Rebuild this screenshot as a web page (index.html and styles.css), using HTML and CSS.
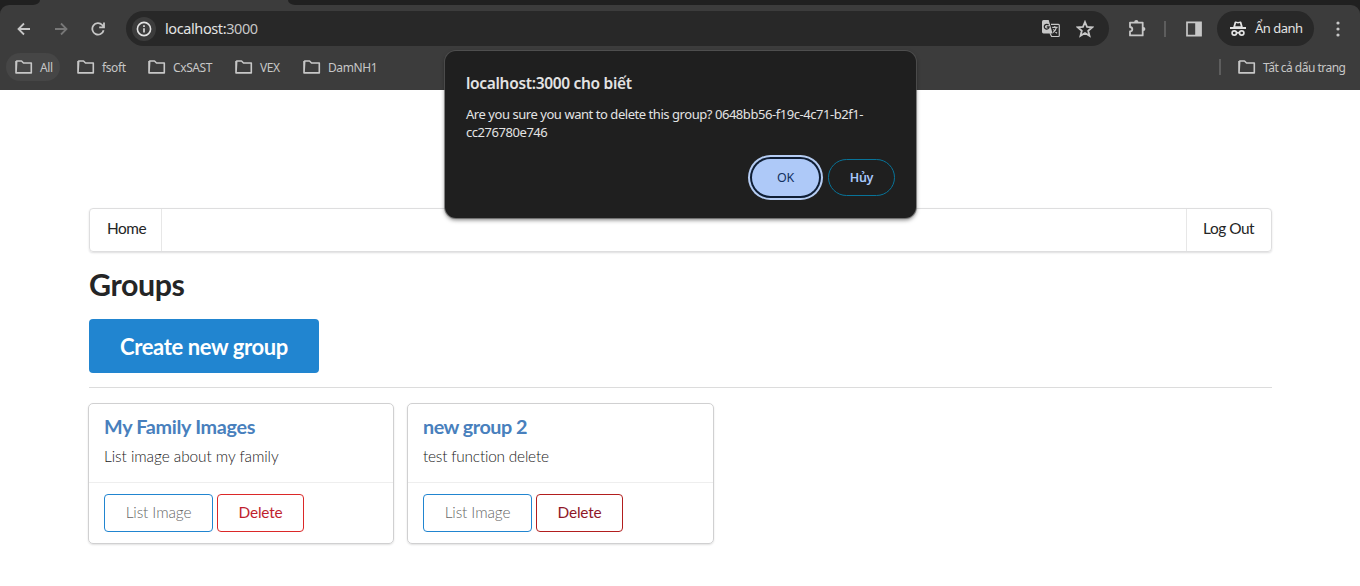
FILE: index.html
```html
<!DOCTYPE html>
<html lang="vi">
<head>
<meta charset="utf-8">
<title>localhost:3000</title>
<link rel="stylesheet" href="styles.css">
</head>
<body>
<svg class="defs" width="0" height="0">
  <symbol id="folder" viewBox="0 0 18 14"><path d="M1.7 1h4.8l2 2h7.8v9.9H1z M1 1v12" fill="none" stroke="currentColor" stroke-width="1.6" stroke-linejoin="round"/></symbol>
</svg>
<header class="browser">
  <div class="tabstrip"><div class="strip-left"></div><div class="strip-right"></div></div>
  <div class="chrome">
    <div class="toolbar">
      <svg class="back" width="14" height="14" viewBox="0 0 14 14"><path d="M13 7H2M7 1.5L1.5 7 7 12.5"/></svg>
      <svg class="forward" width="14" height="14" viewBox="0 0 14 14"><path d="M1 7h11M7 1.5L12.5 7 7 12.5"/></svg>
      <svg class="reload" width="14" height="14" viewBox="0 0 14 14"><path d="M12.6 8.2A5.7 5.7 0 1 1 11.2 3l1.5 1.7M13 .5v4.8H8.2"/></svg>
      <div class="address">
        <span class="info"><svg width="16" height="16" viewBox="0 0 16 16"><circle cx="8" cy="8" r="6.6"/><path d="M8 7.2v4.2M8 4.3v1.7"/></svg></span>
        <span class="url">localhost:<i>3000</i></span>
        <svg class="translate" width="18" height="18" viewBox="0 0 18 18"><path d="M9 4.4h7.4q.9 0 .9.9v10.3q0 .9-.9.9H9.6L8 13.2" fill="none" stroke="#c7c7c7" stroke-width="1.2"/><path d="M1.5 0h5.2l3.9 13.4H1.5Q0 13.4 0 12V1.5Q0 0 1.5 0z" fill="#c7c7c7"/><path d="M6.6 5.2A2.4 2.4 0 1 0 7.1 7H4.8" fill="none" stroke="#282828" stroke-width="1.3"/><path d="M10.2 7.4h5.4M12.8 6v1.4M14.4 7.5q-.8 3-3.4 5.2M11.4 9.2q1.4 2.4 3.6 4" fill="none" stroke="#c7c7c7" stroke-width="1.1"/></svg>
        <svg class="star" width="18" height="18" viewBox="0 0 18 18"><path d="M9 2l2 4.9 5.2.4-4 3.4 1.3 5.1L9 13l-4.5 2.8 1.3-5.1-4-3.4L7 6.9z"/></svg>
      </div>
      <svg class="puzzle" width="19" height="19" viewBox="0 0 19 19"><path d="M2 3.6h12.7v12.8H2v-4q2.3-.2 2.3-2.2T2 8z"/><path class="knob" d="M6.2 3.6V3a2.1 2.1 0 0 1 4.2 0v.6zM14.7 7.9h.6a2.1 2.1 0 0 1 0 4.2h-.6z"/></svg>
      <span class="bar"></span>
      <svg class="panel" width="16" height="16" viewBox="0 0 16 16"><path d="M1 1.3h14v13.4H1z" fill="none" stroke="#c7c7c7" stroke-width="1.7"/><path d="M9.2 1h6v14h-6z" fill="#c7c7c7"/></svg>
      <div class="incognito">
        <svg width="18" height="18" viewBox="0 0 18 18"><path d="M4.2 7L5.6 2q.3-.8 1.1-.5L9 2l2.3-.5q.8-.3 1.1.5l1.4 5z" fill="#e3e3e3"/><path d="M6.2 6.3l1-3.2L9 3.5l1.8-.4 1 3.2z" fill="#282828"/><path d="M1 8h16M7.6 13q1.4-.8 2.8 0" fill="none" stroke="#e3e3e3" stroke-width="1.8"/><g fill="none" stroke="#e3e3e3" stroke-width="1.7"><circle cx="5.3" cy="13" r="2.2"/><circle cx="12.7" cy="13" r="2.2"/></g></svg>
        <span>Ẩn danh</span>
      </div>
      <svg class="dots" width="4" height="16" viewBox="0 0 4 16"><circle cx="2" cy="2" r="1.6"/><circle cx="2" cy="8" r="1.6"/><circle cx="2" cy="14" r="1.6"/></svg>
    </div>
    <nav class="bookmarks">
      <a class="bm bm-all"><svg><use href="#folder"/></svg><span>All</span></a>
      <a class="bm bm-fsoft"><svg><use href="#folder"/></svg><span>fsoft</span></a>
      <a class="bm bm-cx"><svg><use href="#folder"/></svg><span>CxSAST</span></a>
      <a class="bm bm-vex"><svg><use href="#folder"/></svg><span>VEX</span></a>
      <a class="bm bm-dam"><svg><use href="#folder"/></svg><span>DamNH1</span></a>
      <span class="bar bar-bm"></span>
      <a class="bm bm-every"><svg><use href="#folder"/></svg><span>Tất cả dấu trang</span></a>
    </nav>
  </div>
</header>
<main class="page">
  <nav class="menu"><a class="item">Home</a><a class="item last">Log Out</a></nav>
  <h1>Groups</h1>
  <button class="create">Create new group</button>
  <hr>
  <section class="cards">
    <article class="card">
      <div class="content"><h2>My Family Images</h2><p>List image about my family</p></div>
      <div class="extra"><button class="btn list">List Image</button><button class="btn delete">Delete</button></div>
    </article>
    <article class="card">
      <div class="content"><h2 class="second">new group 2</h2><p class="second">test function delete</p></div>
      <div class="extra"><button class="btn list">List Image</button><button class="btn delete visited">Delete</button></div>
    </article>
  </section>
</main>
<div class="dialog" role="alertdialog">
  <h3>localhost:3000 cho biết</h3>
  <p>Are you sure you want to delete this group? 0648bb56-f19c-4c71-b2f1-<br>cc276780e746</p>
  <div class="actions"><button class="ok">OK</button><button class="cancel">Hủy</button></div>
</div>
</body>
</html>
```
FILE: styles.css
```css
* { box-sizing: border-box; }
body { margin: 0; height: 586px; overflow: hidden; background: #fff; font-family: Lato, sans-serif; color: #242526; }
button { font-family: inherit; margin: 0; padding: 0; white-space: nowrap; }
.defs { display: block; position: absolute; }
.browser { height: 90px; background: #202020; font-family: "Noto Sans", sans-serif; color: #c7c7c7; }
.tabstrip { height: 5px; display: flex; justify-content: space-between; background: #3c3c3c; }
.strip-left { width: 40px; background: #202020; border-bottom-right-radius: 7px 5px; }
.strip-right { width: 1072px; background: #202020; border-bottom-left-radius: 7px 5px; }
.chrome { height: 85px; background: #3c3c3c; border-radius: 9px 9px 0 0; padding-top: 6px; }
.toolbar { height: 35px; display: flex; align-items: center; padding-left: 17px; }
.toolbar svg { flex: none; }
.back, .forward, .reload { fill: none; stroke: #c7c7c7; stroke-width: 1.8; }
.forward { margin-left: 23px; stroke: #777; }
.reload { margin-left: 23px; }
.address { width: 983px; height: 35px; margin-left: 21px; border-radius: 18px; background: #282828; display: flex; align-items: center; padding-left: 6px; }
.info { width: 24px; height: 24px; border-radius: 50%; background: #3c3c3c; display: flex; align-items: center; justify-content: center; }
.info svg { fill: none; stroke: #e3e3e3; stroke-width: 1.6; }
.url { margin-left: 9px; width: 877px; font-size: 14.5px; line-height: 20px; padding-bottom: 2px; letter-spacing: -.4px; color: #e3e3e3; }
.url i { font-style: normal; color: #c7c7c7; }
.star { margin-left: 16px; fill: none; stroke: #c7c7c7; stroke-width: 1.8; }
.puzzle { margin-left: 19px; fill: none; stroke: #c7c7c7; stroke-width: 1.8; stroke-linejoin: round; }
.knob { fill: #c7c7c7; stroke: none; }
.bar { width: 2px; height: 16px; background: #5d5d5d; margin-left: 17px; flex: none; }
.panel { margin-left: 20px; }
.incognito { margin-left: 15px; width: 97px; height: 35px; border-radius: 18px; background: #282828; display: flex; align-items: center; padding-left: 12px; color: #e3e3e3; font-size: 13px; letter-spacing: -.5px; white-space: nowrap; }
.incognito span { margin-left: 8px; padding-bottom: 2px; }
.dots { margin-left: 22px; fill: #c7c7c7; }
.bookmarks { height: 28px; margin-top: 7px; display: flex; align-items: center; font-size: 12px; letter-spacing: -.4px; white-space: nowrap; }
.bm { height: 28px; display: flex; align-items: center; flex: none; }
.bm svg { width: 18px; height: 14px; margin-right: 7px; }
.bm-all { width: 54px; margin-left: 6px; padding-left: 9px; border-radius: 14px; background: #464646; }
.bm-fsoft { width: 71px; margin-left: 17px; }
.bm-cx { width: 87px; }
.bm-vex { width: 68px; }
.bm-dam { width: 916px; }
.bar-bm { margin-left: 0; }
.bm-every { margin-left: 17px; letter-spacing: -.52px; }
.page { width: 1183px; margin: 118px 0 0 89px; }
.menu { height: 44px; border: 1px solid #dededf; border-radius: 4px; box-shadow: 0 1px 2px rgba(34,36,38,.15); display: flex; justify-content: space-between; font-size: 15.4px; line-height: 38px; letter-spacing: -.45px; }
.item { width: 72px; padding-left: 17px; border-right: 1px solid #e7e7e7; }
.item.last { width: 85px; padding-left: 16px; border-right: 0; border-left: 1px solid #e7e7e7; }
h1 { margin: 14px 0 16px; height: 37px; font-size: 30.4px; line-height: 37px; font-weight: 700; letter-spacing: -.4px; }
.create { display: block; width: 230px; height: 54px; border: 0; border-radius: 4px; background: #2185d0; color: #fff; font-size: 22px; font-weight: 700; letter-spacing: -.38px; }
hr { height: 1px; margin: 14px 0 15px; border: 0; background: #dcdcdc; }
.cards { display: flex; gap: 13px; margin-left: -1px; }
.card { width: 306px; height: 141px; border: 1px solid #d0d0d1; border-radius: 5px; box-shadow: 0 1px 2px rgba(0,0,0,.12); }
.card + .card { width: 307px; }
.content { height: 79px; padding: 10px 15px 0; border-bottom: 1px solid #eee; }
h2 { margin: 0; font-size: 19.8px; line-height: 24px; color: #4880bd; font-weight: 700; letter-spacing: -.32px; }
h2.second { letter-spacing: -.5px; }
.content p { margin: 7px 0 0; font-size: 15.4px; line-height: 22px; font-weight: 300; letter-spacing: -.06px; color: #222; }
.content p.second { letter-spacing: -.2px; }
.extra { padding: 11px 15px; display: flex; gap: 4px; }
.btn { width: 109px; height: 38px; padding-bottom: 2px; background: #fff; border: 1px solid #2185d0; border-radius: 4px; font-size: 15.4px; font-weight: 300; letter-spacing: -.1px; color: #666; }
.btn.delete { width: 87px; border-color: #db2828; color: #c01e2e; font-weight: 400; letter-spacing: -.2px; }
.btn.visited { border-color: #b21e1e; color: #8f1728; }
.dialog { position: absolute; left: 445px; top: 51px; width: 471px; height: 167px; border-radius: 11px; background: #1f1f1f; color: #e3e3e3; font-family: "Noto Sans", sans-serif; padding: 21px 21px; box-shadow: 0 0 0 1px rgba(90,90,90,.65), 0 2px 4px rgba(0,0,0,.5); }
.dialog h3 { margin: 0; font-size: 15.5px; line-height: 22px; font-weight: 600; letter-spacing: -.32px; }
.dialog p { margin: 11px 0 0; font-size: 13px; line-height: 18px; letter-spacing: -.45px; white-space: nowrap; }
.actions { display: flex; justify-content: flex-end; align-items: center; gap: 9px; margin-top: 18px; }
.actions button { width: 67px; height: 37px; border-radius: 19px; font-size: 12.5px; letter-spacing: -.3px; }
.ok { border: 0; background: #aec9f8; color: #12305f; box-shadow: 0 0 0 2px #0f1e35, 0 0 0 4px #b6cdf3; }
.actions .cancel { border: 1px solid #087398; background: transparent; color: #a8c7fa; font-weight: 600; }
```
